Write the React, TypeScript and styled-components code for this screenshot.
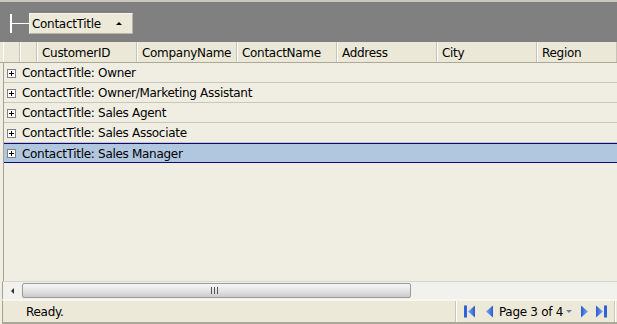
import React from 'react';
import styled, { createGlobalStyle } from 'styled-components';

const BEIGE = '#f0eee2';
const HEADER = '#ebe8d7';
const LINE = '#c9c6b8';
const FONT = `"DejaVu Sans", "Liberation Sans", sans-serif`;

const columns = ['CustomerID', 'CompanyName', 'ContactName', 'Address', 'City', 'Region'];
const groups = [
  'Owner',
  'Owner/Marketing Assistant',
  'Sales Agent',
  'Sales Associate',
  'Sales Manager',
];

const GlobalStyle = createGlobalStyle`
  html, body {
    margin: 0;
    padding: 0;
    background: #ffffff;
  }
  body {
    font-family: ${FONT};
    font-size: 11px;
    letter-spacing: -0.3px;
    color: #000;
  }
`;

function ExpandIcon() {
  return (
    <svg width="9" height="9" viewBox="0 0 9 9">
      <rect x="0.5" y="0.5" width="8" height="8" fill="#fff" stroke="#808080" />
      <path d="M2 4.5h5M4.5 2v5" stroke="#000" />
    </svg>
  );
}

type PagerKind = 'first' | 'prev' | 'next' | 'last';

function PagerIcon({ kind }: { kind: PagerKind }) {
  const flip = kind === 'next' || kind === 'last';
  const bar = kind === 'first' || kind === 'last';
  return (
    <svg
      width={bar ? 11 : 8}
      height="13"
      viewBox={bar ? '0 0 11 13' : '0 0 8 13'}
      style={{ transform: flip ? 'scaleX(-1)' : undefined }}
    >
      <defs>
        <linearGradient id={`pg-${kind}`} x1="0" y1="0" x2="1" y2="0">
          <stop offset="0" stopColor="#7fa8f0" />
          <stop offset="1" stopColor="#2a5bd0" />
        </linearGradient>
      </defs>
      {bar && <rect x="0" y="0.5" width="3" height="12" fill="#2f62d6" />}
      <path
        d={bar ? 'M11 0.5 L4 6.5 L11 12.5 Z' : 'M8 0.5 L1 6.5 L8 12.5 Z'}
        fill={`url(#pg-${kind})`}
      />
    </svg>
  );
}

export default function App() {
  return (
    <>
      <GlobalStyle />
      <Grid>
        <GroupPanel>
          <Connector />
          <GroupButton>
            ContactTitle
            <SortArrow />
          </GroupButton>
        </GroupPanel>
        <HeaderRow>
          <IndicatorCell />
          <IndicatorCell />
          {columns.map((col) => (
            <HeaderCell key={col} $last={col === 'Region'}>
              {col}
            </HeaderCell>
          ))}
        </HeaderRow>
        <Body>
          {groups.map((g) => (
            <GroupRow key={g} $selected={g === 'Sales Manager'}>
              <ExpandIcon />
              <GroupText>ContactTitle: {g}</GroupText>
            </GroupRow>
          ))}
        </Body>
        <ScrollBar>
          <ScrollArrow />
          <Thumb>
            <Grip />
          </Thumb>
          <Track />
        </ScrollBar>
        <StatusBar>
          <StatusText>Ready.</StatusText>
          <Pager>
            <PagerButton $space={10}>
              <PagerIcon kind="first" />
            </PagerButton>
            <PagerButton $space={6}>
              <PagerIcon kind="prev" />
            </PagerButton>
            <PageLabel>
              Page 3 of 4
              <DropArrow />
            </PageLabel>
            <PagerButton $space={7}>
              <PagerIcon kind="next" />
            </PagerButton>
            <PagerButton $space={0}>
              <PagerIcon kind="last" />
            </PagerButton>
          </Pager>
        </StatusBar>
      </Grid>
    </>
  );
}

const Grid = styled.div`
  width: 617px;
  height: 324px;
  display: flex;
  flex-direction: column;
  background: ${BEIGE};
  border-top: 2px solid #c9c7ba;
  box-sizing: border-box;
  overflow: hidden;
`;

const GroupPanel = styled.div`
  height: 40px;
  flex: none;
  display: flex;
  align-items: flex-start;
  padding: 11px 0 0 10px;
  box-sizing: border-box;
  background: #808080;
`;

const Connector = styled.div`
  width: 17px;
  height: 19px;
  margin-top: 1px;
  border-left: 2px solid #ffffff;
  position: relative;
  &::after {
    content: '';
    position: absolute;
    left: 0;
    right: 0;
    top: 9px;
    height: 1px;
    background: #ffffff;
  }
`;

const GroupButton = styled.div`
  width: 104px;
  height: 21px;
  box-sizing: border-box;
  display: flex;
  align-items: center;
  padding: 1px 0 0 2px;
  background: #ece9d8;
  border: 1px solid #f6f5ee;
  border-right-color: #b8b5a6;
  border-bottom-color: #b8b5a6;
  font-size: 12px;
`;

const SortArrow = styled.span`
  margin: 0 0 1px 15px;
  width: 0;
  height: 0;
  border-left: 3px solid transparent;
  border-right: 3px solid transparent;
  border-bottom: 3px solid #000;
`;

const HeaderRow = styled.div`
  height: 20px;
  flex: none;
  display: flex;
  padding-left: 3px;
  background: ${HEADER};
  border-bottom: 1px solid #aca899;
`;

const IndicatorCell = styled.div`
  width: 17px;
  flex: none;
  box-sizing: border-box;
  border-left: 1px solid #ffffff;
  border-right: 1px solid #c7c4b5;
`;

const HeaderCell = styled.div<{ $last?: boolean }>`
  width: ${(p) => (p.$last ? 'auto' : '100px')};
  flex: ${(p) => (p.$last ? '1' : 'none')};
  box-sizing: border-box;
  display: flex;
  align-items: center;
  padding: 1px 0 0 4px;
  border-left: 1px solid #ffffff;
  border-right: 1px solid #c7c4b5;
  font-size: 12px;
  white-space: nowrap;
`;

const Body = styled.div`
  flex: 1;
  min-height: 0;
  margin-left: 3px;
  border-left: 1px solid #a5a293;
`;

const GroupRow = styled.div<{ $selected?: boolean }>`
  height: 20px;
  box-sizing: border-box;
  display: flex;
  align-items: center;
  gap: 6px;
  padding: 1px 0 0 3px;
  background: ${(p) => (p.$selected ? '#b1c6df' : BEIGE)};
  border-top: ${(p) => (p.$selected ? '1px solid #0a0a84' : 'none')};
  border-bottom: 1px solid ${(p) => (p.$selected ? '#0a0a84' : LINE)};
`;

const GroupText = styled.span`
  font-size: 12px;
  white-space: nowrap;
`;

const ScrollBar = styled.div`
  height: 17px;
  flex: none;
  display: flex;
  align-items: stretch;
  background: #f1f1ee;
  border-top: 1px solid #d8d6cc;
  margin-left: 2px;
  border-left: 1px solid #a5a293;
`;

const ScrollArrow = styled.div`
  width: 19px;
  flex: none;
  display: flex;
  align-items: center;
  justify-content: center;
  &::before {
    content: '';
    width: 0;
    height: 0;
    border-top: 3px solid transparent;
    border-bottom: 3px solid transparent;
    border-right: 3px solid #333;
  }
`;

const Thumb = styled.div`
  width: 389px;
  flex: none;
  margin: 1px 0 1px 0;
  box-sizing: border-box;
  display: flex;
  align-items: center;
  justify-content: center;
  border: 1px solid #9a9a9a;
  border-radius: 2px;
  background: linear-gradient(#f7f7f7, #e4e4e4 50%, #cbcbcb);
`;

const Grip = styled.div`
  width: 7px;
  height: 7px;
  margin-left: -4px;
  background: repeating-linear-gradient(90deg, #555 0 1px, transparent 1px 3px);
`;

const Track = styled.div`
  flex: 1;
`;

const StatusBar = styled.div`
  height: 25px;
  flex: none;
  box-sizing: border-box;
  display: flex;
  align-items: center;
  justify-content: space-between;
  background: #ece9d8;
  border-top: 2px solid #f7f6ef;
  margin-left: 2px;
  border-left: 1px solid #a5a293;
  border-bottom: 2px solid #aca899;
`;

const StatusText = styled.span`
  margin-left: 23px;
  font-size: 12px;
`;

const Pager = styled.div`
  height: 100%;
  display: flex;
  align-items: center;
  padding: 0 7px 0 7px;
  margin-right: 2px;
  box-sizing: border-box;
  border-left: 1px solid #fff;
  border-right: 1px solid #c9c6b6;
  box-shadow: -1px 0 0 #c9c6b6, 1px 0 0 #fff;
`;

const PagerButton = styled.span<{ $space: number }>`
  display: flex;
  align-items: center;
  margin-right: ${(p) => p.$space}px;
`;

const PageLabel = styled.span`
  display: flex;
  align-items: center;
  gap: 3px;
  font-size: 12px;
  margin-right: 9px;
`;

const DropArrow = styled.span`
  width: 0;
  height: 0;
  border-left: 3px solid transparent;
  border-right: 3px solid transparent;
  border-top: 3px solid #6a7ea8;
`;
